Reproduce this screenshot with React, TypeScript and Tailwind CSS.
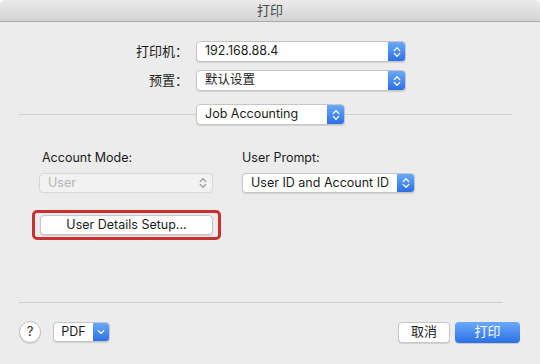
import React from 'react';

const font = { fontFamily: 'Inter, "Noto Sans CJK SC", sans-serif' };

const Stepper: React.FC<{ color?: string }> = ({ color = '#ffffff' }) => (
  <svg width="8" height="12" viewBox="0 0 8 12" fill="none" stroke={color} strokeWidth="1.3" strokeLinecap="round" strokeLinejoin="round">
    <path d="M1.2 4.6 L4 1.8 L6.8 4.6" />
    <path d="M1.2 7.4 L4 10.2 L6.8 7.4" />
  </svg>
);

const Popup: React.FC<{ text: string; w: string; h?: string; disabled?: boolean }> = ({ text, w, h = 'h-[21px]', disabled }) => {
  if (disabled) {
    return (
      <div className={`${w} ${h} flex items-center justify-between rounded-[4px] border border-[#d8d8d8] bg-[#f2f2f2] pl-[8px] pr-[5px] text-[12.5px] text-[#b4b4b4]`}>
        <span>{text}</span>
        <Stepper color="#9a9a9a" />
      </div>
    );
  }
  return (
    <div className={`${w} ${h} flex items-center rounded-[4px] border border-[#c6c6c6] bg-white shadow-[0_1px_1px_rgba(0,0,0,0.12)] overflow-hidden`}>
      <span className="flex-1 pl-[8px] text-[12.5px] text-[#1c1c1c] leading-none whitespace-nowrap">{text}</span>
      <div className="h-full w-[17px] flex items-center justify-center bg-gradient-to-b from-[#6aa9f9] to-[#2d6fe6]">
        <Stepper />
      </div>
    </div>
  );
};

const App: React.FC = () => {
  return (
    <div className="w-[540px] h-[364px] bg-[#ececec] overflow-hidden rounded-t-[5px]" style={font}>
      <div className="h-[22px] border-b border-[#a9a9a9] bg-gradient-to-b from-[#ebebeb] to-[#d4d4d4] flex items-center justify-center text-[13px] text-[#4a4a4a]">
        打印
      </div>

      <div className="mt-[19px] flex items-center">
        <div className="w-[188px] text-right text-[13px] text-[#1c1c1c]">打印机：</div>
        <div className="ml-[8px]">
          <Popup text="192.168.88.4" w="w-[210px]" />
        </div>
      </div>
      <div className="mt-[8px] flex items-center">
        <div className="w-[188px] text-right text-[13px] text-[#1c1c1c]">预置：</div>
        <div className="ml-[8px]">
          <Popup text="默认设置" w="w-[210px]" />
        </div>
      </div>

      <div className="mt-[13px] flex items-center">
        <div className="ml-[19px] w-[177px] h-px bg-[#d0d0d0]" />
        <Popup text="Job Accounting" w="w-[149px]" />
        <div className="w-[167px] h-px bg-[#d0d0d0]" />
      </div>

      <div className="mt-[25px] grid grid-cols-[200px_200px] pl-[39px] text-[12.5px] text-[#1c1c1c]">
        <div className="pl-[3px] leading-[16px]">Account Mode:</div>
        <div className="pl-[3px] leading-[16px]">User Prompt:</div>
        <div className="mt-[7px]">
          <Popup text="User" w="w-[174px]" h="h-[20px]" disabled />
        </div>
        <div className="mt-[7px] pl-[3px]">
          <Popup text="User ID and Account ID" w="w-[173px]" h="h-[20px]" />
        </div>
      </div>

      <div className="mt-[17px] ml-[32px] w-[189px] h-[30px] rounded-[5px] border-[3px] border-[#c9312e] flex items-center justify-center">
        <div className="w-[173px] h-[20px] rounded-[4px] border border-[#c6c6c6] bg-white shadow-[0_1px_1px_rgba(0,0,0,0.12)] flex items-center justify-center text-[12.5px] text-[#1c1c1c]">
          User Details Setup...
        </div>
      </div>

      <div className="mt-[62px] ml-[19px] w-[484px] h-px bg-[#cfcfcf]" />

      <div className="mt-[18px] flex items-center pl-[19px] pr-[20px]">
        <div className="w-[22px] h-[22px] rounded-full border border-[#c2c2c2] bg-white shadow-[0_1px_1px_rgba(0,0,0,0.12)] flex items-center justify-center text-[13px] text-[#2a2a2a]">
          ?
        </div>
        <div className="ml-[12px] w-[57px] h-[20px] flex items-center rounded-[4px] border border-[#c6c6c6] bg-white shadow-[0_1px_1px_rgba(0,0,0,0.12)] overflow-hidden">
          <span className="flex-1 text-center text-[12.5px] text-[#1c1c1c]">PDF</span>
          <div className="h-full w-[16px] flex items-center justify-center bg-gradient-to-b from-[#6aa9f9] to-[#2d6fe6]">
            <svg width="8" height="6" viewBox="0 0 8 6" fill="none" stroke="#ffffff" strokeWidth="1.3" strokeLinecap="round" strokeLinejoin="round">
              <path d="M1.2 1.6 L4 4.4 L6.8 1.6" />
            </svg>
          </div>
        </div>
        <div className="flex-1" />
        <div className="w-[52px] h-[21px] rounded-[4px] border border-[#c6c6c6] bg-white shadow-[0_1px_1px_rgba(0,0,0,0.12)] flex items-center justify-center text-[13px] text-[#1c1c1c]">
          取消
        </div>
        <div className="ml-[5px] w-[65px] h-[21px] rounded-[4px] bg-gradient-to-b from-[#6aa9f9] to-[#2d6fe6] shadow-[0_1px_1px_rgba(0,0,0,0.15)] flex items-center justify-center text-[13px] text-white">
          打印
        </div>
      </div>
    </div>
  );
};

export default App;
